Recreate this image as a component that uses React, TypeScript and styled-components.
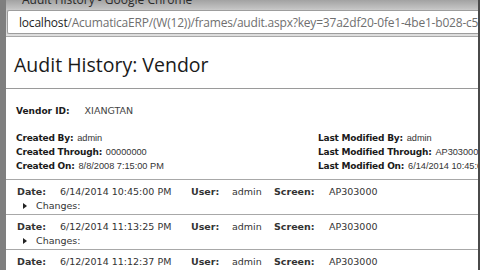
import React, { FC } from 'react';
import styled, { createGlobalStyle } from 'styled-components';

const Global = createGlobalStyle`
  html, body {
    margin: 0;
    padding: 0;
    overflow: hidden;
    background: #fff;
  }
`;

type Entry = { date: string; user: string; screen: string };

const entries: Entry[] = [
  { date: '6/14/2014 10:45:00 PM', user: 'admin', screen: 'AP303000' },
  { date: '6/12/2014 11:13:25 PM', user: 'admin', screen: 'AP303000' },
  { date: '6/12/2014 11:12:37 PM', user: 'admin', screen: 'AP303000' },
];

const DocIcon: FC = () => (
  <svg width="9" height="12" viewBox="0 0 9 12">
    <path d="M0.5 0.5 H5.5 L8.5 3.5 V11.5 H0.5 Z" fill="#fff" stroke="#8a8a8a" />
    <path d="M5.5 0.5 V3.5 H8.5" fill="none" stroke="#8a8a8a" />
  </svg>
);

const Caret: FC = () => (
  <svg width="4" height="6" viewBox="0 0 4 6">
    <path d="M0 0 L4 3 L0 6 Z" fill="#222" />
  </svg>
);

export default function App() {
  return (
    <>
      <Global />
      <Window>
        <TitleBar>
          <TitleText>Audit History - Google Chrome</TitleText>
        </TitleBar>
        <Toolbar>
          <AddressBox>
            <DocIcon />
            <Url>
              <Host>localhost</Host>
              /AcumaticaERP/(W(12))/frames/audit.aspx?key=37a2df20-0fe1-4be1-b028-c5a1
            </Url>
          </AddressBox>
        </Toolbar>
        <Page>
          <Heading>Audit History: Vendor</Heading>
          <Rule />
          <VendorLine>
            <Label>Vendor ID:</Label>
            <VendorValue>XIANGTAN</VendorValue>
          </VendorLine>
          <Meta>
            <MetaCol>
              <MetaLine><Label>Created By:</Label> <MetaValue>admin</MetaValue></MetaLine>
              <MetaLine><Label>Created Through:</Label> <MetaValue>00000000</MetaValue></MetaLine>
              <MetaLine><Label>Created On:</Label> <MetaValue>8/8/2008 7:15:00 PM</MetaValue></MetaLine>
            </MetaCol>
            <MetaCol>
              <MetaLine><Label>Last Modified By:</Label> <MetaValue>admin</MetaValue></MetaLine>
              <MetaLine><Label>Last Modified Through:</Label> <MetaValue>AP303000</MetaValue></MetaLine>
              <MetaLine><Label>Last Modified On:</Label> <MetaValue>6/14/2014 10:45:00 PM</MetaValue></MetaLine>
            </MetaCol>
          </Meta>
          <Entries>
            {entries.map((e, i) => (
              <EntryRow key={i}>
                <EntryHead>
                  <EntryLabel>Date:</EntryLabel>
                  <EntryValue>{e.date}</EntryValue>
                  <EntryLabel>User:</EntryLabel>
                  <EntryValue>{e.user}</EntryValue>
                  <EntryLabel>Screen:</EntryLabel>
                  <EntryValue>{e.screen}</EntryValue>
                </EntryHead>
                <Changes>
                  <Caret />
                  <span>Changes:</span>
                </Changes>
              </EntryRow>
            ))}
          </Entries>
        </Page>
      </Window>
    </>
  );
}

const Window = styled.div`
  width: 480px;
  height: 270px;
  display: flex;
  flex-direction: column;
  background: #d6d6d6;
  border-left: 6px solid #7f7f7f;
  border-right: 2px solid #4a4a4a;
  box-sizing: border-box;
  overflow: hidden;
`;

const TitleBar = styled.div`
  flex-shrink: 0;
  height: 9px;
  overflow: hidden;
  background: linear-gradient(#a2a2a2, #c4c4c4);
  padding-left: 16px;
`;

const TitleText = styled.div`
  margin-top: -8px;
  font-family: 'Open Sans', sans-serif;
  font-size: 12px;
  line-height: 16px;
  color: #2a2a2a;
  white-space: nowrap;
`;

const Toolbar = styled.div`
  flex-shrink: 0;
  padding: 1px 0 2px 1px;
  background: linear-gradient(#c8c8c8, #dedede);
`;

const AddressBox = styled.div`
  height: 22px;
  display: flex;
  align-items: center;
  gap: 6px;
  padding-left: 5px;
  background: #fff;
  border: 1px solid #9d9d9d;
  border-right: none;
  border-radius: 2px 0 0 2px;
  overflow: hidden;
`;

const Url = styled.div`
  font-family: 'Open Sans', sans-serif;
  font-size: 12px;
  color: #6f6f6f;
  white-space: nowrap;
  letter-spacing: -0.2px;
`;

const Host = styled.span`
  color: #1e1e1e;
`;

const Page = styled.div`
  flex: 1;
  background: #fff;
  border-top: 1px solid #a9a9a9;
  padding-top: 14px;
`;

const Heading = styled.h1`
  margin: 0 0 0 8px;
  font-family: 'Open Sans', sans-serif;
  font-weight: 400;
  font-size: 19.5px;
  line-height: 28px;
  color: #1a1a1a;
`;

const Rule = styled.div`
  height: 1px;
  background: #9a9a9a;
  margin-top: 9px;
`;

const Label = styled.span`
  font-family: 'DejaVu Sans', Verdana, sans-serif;
  font-weight: bold;
  font-size: 9px;
  line-height: 14px;
  color: #1a1a1a;
  white-space: nowrap;
`;

const VendorLine = styled.div`
  display: flex;
  align-items: baseline;
  gap: 15px;
  padding: 15px 0 0 10px;
  line-height: 12px;
`;

const VendorValue = styled.span`
  font-family: 'DejaVu Sans', Verdana, sans-serif;
  font-size: 9.5px;
  color: #444;
`;

const Meta = styled.div`
  display: grid;
  grid-template-columns: 302px 1fr;
  padding: 11px 0 8px 10px;
`;

const MetaCol = styled.div`
  display: flex;
  flex-direction: column;
`;

const MetaLine = styled.div`
  height: 14px;
  line-height: 14px;
  white-space: nowrap;
  letter-spacing: -0.2px;
`;

const MetaValue = styled.span`
  font-family: 'Liberation Sans', Arial, sans-serif;
  font-size: 9.2px;
  line-height: 14px;
  color: #333;
  letter-spacing: 0;
`;

const Entries = styled.div`
  display: flex;
  flex-direction: column;
`;

const EntryRow = styled.div`
  border-top: 1px solid #a8a8a8;
  padding: 5px 0 1px 11px;
  height: 28px;
`;

const EntryHead = styled.div`
  display: grid;
  grid-template-columns: 43px 131px 41px 42px 55px auto;
  align-items: baseline;
  line-height: 14px;
`;

const EntryLabel = styled.span`
  font-family: 'DejaVu Sans', Verdana, sans-serif;
  font-weight: bold;
  font-size: 9.5px;
  color: #333;
  white-space: nowrap;
`;

const EntryValue = styled.span`
  font-family: 'DejaVu Sans', Verdana, sans-serif;
  font-size: 9.5px;
  color: #333;
  white-space: nowrap;
`;

const Changes = styled.div`
  display: flex;
  align-items: center;
  gap: 9px;
  padding-left: 6px;
  line-height: 14px;
  font-family: 'DejaVu Sans', Verdana, sans-serif;
  font-size: 9.5px;
  color: #333;
`;
